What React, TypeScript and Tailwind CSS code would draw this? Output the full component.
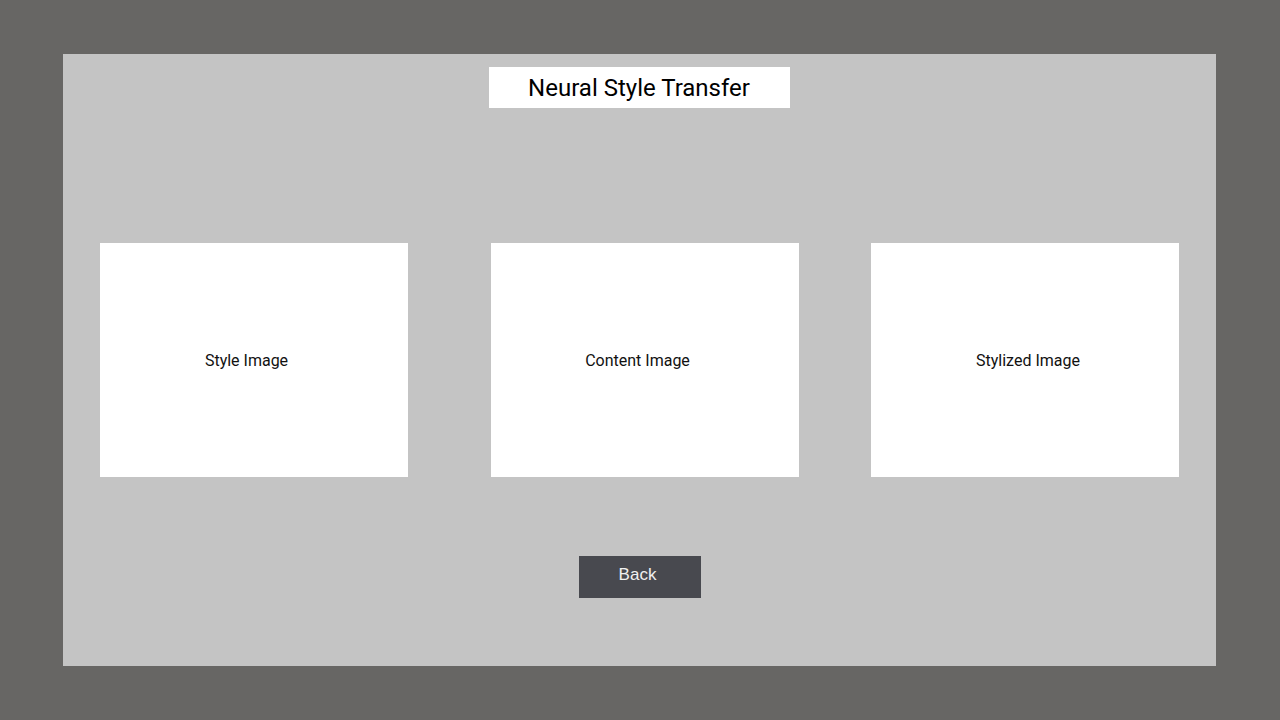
import React from "react";

const cards = [
  { label: "Style Image", cls: "ml-[37px]", text: "pr-[15px]" },
  { label: "Content Image", cls: "ml-[83px]", text: "pr-[15px]" },
  { label: "Stylized Image", cls: "ml-[72px]", text: "pl-[6px]" },
];

export default function App() {
  return (
    <div
      className="w-[1280px] h-[720px] bg-[#676664] pt-[54px] pl-[63px]"
      style={{ fontFamily: "Roboto, 'Liberation Sans', sans-serif" }}
    >
      <div className="w-[1153px] h-[612px] bg-[#c4c4c4] flex flex-col">
        <div className="mt-[13px] ml-[426px] w-[301px] h-[41px] bg-white flex items-center justify-center text-[24px] text-black pr-[1px]">
          Neural Style Transfer
        </div>

        <div className="flex mt-[135px]">
          {cards.map((c) => (
            <div
              key={c.label}
              className={`${c.cls} w-[308px] h-[234px] bg-white flex items-center justify-center text-[16px] text-[#111] pt-[2px]`}
            >
              <span className={c.text}>{c.label}</span>
            </div>
          ))}
        </div>

        <button
          className="mt-[79px] ml-[516px] w-[122px] h-[42px] bg-[#48494f] text-[#f0f0f0] text-[17px] flex items-center justify-center pb-[4px] pr-[5px]"
          style={{ fontFamily: "'Liberation Sans', Arial, sans-serif" }}
        >
          Back
        </button>
      </div>
    </div>
  );
}
